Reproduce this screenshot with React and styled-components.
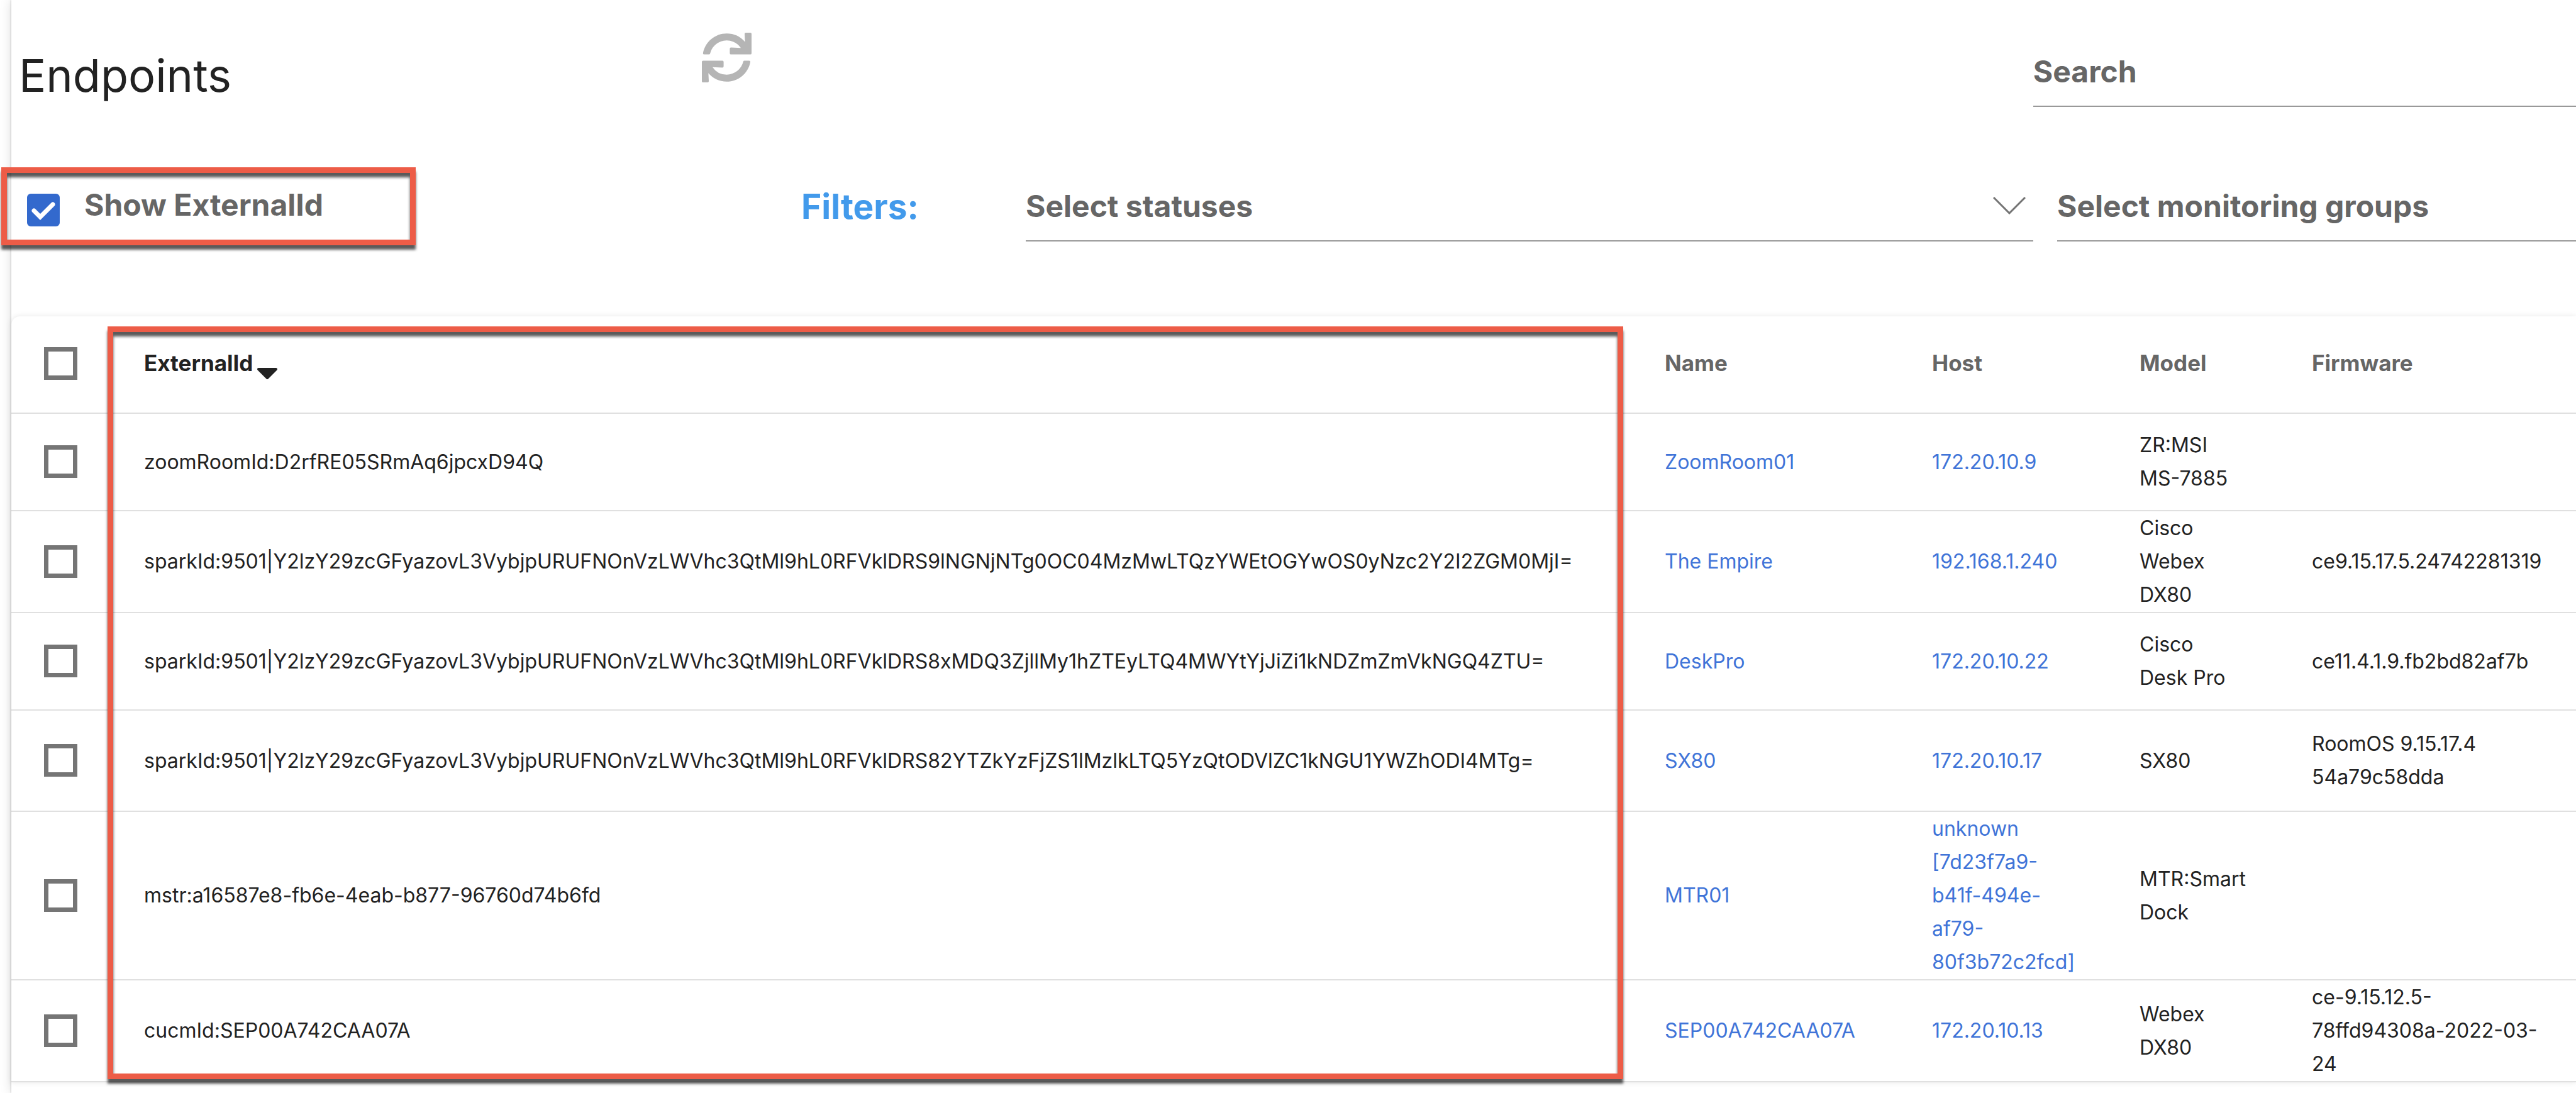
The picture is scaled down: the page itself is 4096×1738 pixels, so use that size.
import React, { useState } from "react";
import styled, { createGlobalStyle, css } from "styled-components";
import { FaSync } from "react-icons/fa";

const endpoints = [
  {
    externalId: "zoomRoomId:D2rfRE05SRmAq6jpcxD94Q",
    name: "ZoomRoom01",
    host: "172.20.10.9",
    model: "ZR:MSI\nMS-7885",
    firmware: "",
  },
  {
    externalId:
      "sparkId:9501|Y2lzY29zcGFyazovL3VybjpURUFNOnVzLWVhc3QtMl9hL0RFVklDRS9lNGNjNTg0OC04MzMwLTQzYWEtOGYwOS0yNzc2Y2I2ZGM0MjI=",
    name: "The Empire",
    host: "192.168.1.240",
    model: "Cisco\nWebex\nDX80",
    firmware: "ce9.15.17.5.24742281319",
  },
  {
    externalId:
      "sparkId:9501|Y2lzY29zcGFyazovL3VybjpURUFNOnVzLWVhc3QtMl9hL0RFVklDRS8xMDQ3ZjllMy1hZTEyLTQ4MWYtYjJiZi1kNDZmZmVkNGQ4ZTU=",
    name: "DeskPro",
    host: "172.20.10.22",
    model: "Cisco\nDesk Pro",
    firmware: "ce11.4.1.9.fb2bd82af7b",
  },
  {
    externalId:
      "sparkId:9501|Y2lzY29zcGFyazovL3VybjpURUFNOnVzLWVhc3QtMl9hL0RFVklDRS82YTZkYzFjZS1lMzlkLTQ5YzQtODVlZC1kNGU1YWZhODI4MTg=",
    name: "SX80",
    host: "172.20.10.17",
    model: "SX80",
    firmware: "RoomOS 9.15.17.4\n54a79c58dda",
    tall: true,
  },
  {
    externalId: "mstr:a16587e8-fb6e-4eab-b877-96760d74b6fd",
    name: "MTR01",
    host: "unknown\n[7d23f7a9-\nb41f-494e-\naf79-\n80f3b72c2fcd]",
    model: "MTR:Smart\nDock",
    firmware: "",
  },
  {
    externalId: "cucmId:SEP00A742CAA07A",
    name: "SEP00A742CAA07A",
    host: "172.20.10.13",
    model: "Webex\nDX80",
    firmware: "ce-9.15.12.5-\n78ffd94308a-2022-03-\n24",
  },
];

const SelectField = ({ label, noArrow }) => (
  <SelectWrapper>
    <StyledSelect aria-label={label} defaultValue="">
      <option value="">{label}</option>
    </StyledSelect>
    {!noArrow && (
      <Chevron viewBox="0 0 52 28" aria-hidden="true">
        <path d="M1 1 L26 26 L51 1" />
      </Chevron>
    )}
  </SelectWrapper>
);

const App = () => {
  const [showExternalId, setShowExternalId] = useState(true);
  const [selected, setSelected] = useState([]);

  const toggleRow = (name) => {
    setSelected((prev) =>
      prev.includes(name) ? prev.filter((n) => n !== name) : [...prev, name]
    );
  };

  const toggleAll = () => {
    setSelected((prev) =>
      prev.length === endpoints.length ? [] : endpoints.map((e) => e.name)
    );
  };

  return (
    <>
      <GlobalStyle />
      <Panel>
        <Header>
          <Title>Endpoints</Title>
          <RefreshButton type="button" aria-label="Refresh">
            <FaSync />
          </RefreshButton>
          <SearchInput type="search" placeholder="Search" aria-label="Search" />
        </Header>

        <FiltersRow>
          <ExternalIdToggle>
            <ToggleCheckbox
              type="checkbox"
              checked={showExternalId}
              onChange={(e) => setShowExternalId(e.target.checked)}
            />
            <span>Show ExternalId</span>
          </ExternalIdToggle>
          <FiltersLabel>Filters:</FiltersLabel>
          <Selects>
            <SelectField label="Select statuses" />
            <SelectField label="Select monitoring groups" noArrow />
          </Selects>
        </FiltersRow>

        <Card>
          <Table>
            <colgroup>
              <Col $width={211} />
              {showExternalId && <Col />}
              <Col $width={425} />
              <Col $width={330} />
              <Col $width={274} />
              <Col $width={420} />
            </colgroup>
            <thead>
              <Row>
                <CheckHeader>
                  <RowCheckbox
                    type="checkbox"
                    aria-label="Select all endpoints"
                    checked={selected.length === endpoints.length}
                    onChange={toggleAll}
                  />
                </CheckHeader>
                {showExternalId && (
                  <HeaderCell $active>
                    <SortButton type="button">
                      ExternalId
                      <SortArrow viewBox="0 0 34 20" aria-hidden="true">
                        <path d="M3 3 H31 L17 17 Z" />
                      </SortArrow>
                    </SortButton>
                  </HeaderCell>
                )}
                <HeaderCell>Name</HeaderCell>
                <HeaderCell>Host</HeaderCell>
                <HeaderCell>Model</HeaderCell>
                <HeaderCell>Firmware</HeaderCell>
              </Row>
            </thead>
            <tbody>
              {endpoints.map((e) => (
                <Row key={e.name} $tall={e.tall}>
                  <CheckCell>
                    <RowCheckbox
                      type="checkbox"
                      aria-label={`Select ${e.name}`}
                      checked={selected.includes(e.name)}
                      onChange={() => toggleRow(e.name)}
                    />
                  </CheckCell>
                  {showExternalId && <Cell>{e.externalId}</Cell>}
                  <Cell>
                    <CellLink href="#">{e.name}</CellLink>
                  </Cell>
                  <Cell>
                    <CellLink href="#">{e.host}</CellLink>
                  </Cell>
                  <Cell>{e.model}</Cell>
                  <Cell>{e.firmware}</Cell>
                </Row>
              ))}
            </tbody>
          </Table>
          {showExternalId && <ColumnHighlight />}
        </Card>
      </Panel>
    </>
  );
};

const GlobalStyle = createGlobalStyle`
  *, *::before, *::after {
    box-sizing: border-box;
  }

  body {
    margin: 0;
    overflow: hidden;
    background: #fff;
    color: #222;
    font-family: Inter, "Liberation Sans", sans-serif;
    font-size: 32px;
  }

  button, input, select {
    margin: 0;
    padding: 0;
    border: 0;
    border-radius: 0;
    background: none;
    color: inherit;
    font: inherit;
  }
`;

const highlightFrame = css`
  border: 9px solid #ed5c47;
  box-shadow: 0 7px 4px rgba(0, 0, 0, 0.65),
    inset 0 7px 4px rgba(0, 0, 0, 0.65);
`;

const fieldText = css`
  color: #666;
  font-size: 48px;
  font-weight: 700;
`;

const Panel = styled.main`
  min-height: 100vh;
  margin-left: 18px;
  background: #fff;
  box-shadow: -1px 0 2px rgba(0, 0, 0, 0.16), 0 0 18px rgba(0, 0, 0, 0.14);
`;

const Header = styled.header`
  display: grid;
  grid-template-columns: 1086fr 2116fr 863fr;
  align-items: start;
  padding-left: 12px;
`;

const Title = styled.h1`
  margin: 78px 0 0;
  font-size: 72px;
  font-weight: 400;
  line-height: 84px;
`;

const RefreshButton = styled.button`
  justify-self: start;
  margin-top: 52px;
  color: #b5b5b5;
  cursor: pointer;

  svg {
    display: block;
    width: 79px;
    height: 79px;
  }
`;

const SearchInput = styled.input`
  ${fieldText}
  width: 100%;
  height: 112px;
  margin-top: 58px;
  border-bottom: 2px solid #999;
  outline: none;
  appearance: none;

  &::placeholder {
    color: #666;
    opacity: 1;
  }
`;

const FiltersRow = styled.section`
  display: grid;
  grid-template-columns: 1256fr 357fr 2465fr;
  margin-top: 96px;
`;

const ExternalIdToggle = styled.label`
  ${highlightFrame}
  ${fieldText}
  display: flex;
  align-items: flex-start;
  gap: 39px;
  width: 659px;
  height: 124px;
  margin-left: -16px;
  padding: 33px 32px 0;
  line-height: 36px;
`;

const ToggleCheckbox = styled.input`
  appearance: none;
  width: 52px;
  height: 52px;
  border: 2px solid #3369cd;
  border-radius: 6px;

  &:checked {
    background: #3369cd
      url("data:image/svg+xml,%3Csvg xmlns='http://www.w3.org/2000/svg' viewBox='0 0 52 52'%3E%3Cpath d='M11 27 L21 37 L41 17' fill='none' stroke='white' stroke-width='7' stroke-linecap='round'/%3E%3C/svg%3E")
      center / 52px 52px no-repeat;
  }
`;

const FiltersLabel = styled.h2`
  margin: 0;
  color: #429aeb;
  font-size: 55px;
  font-weight: 700;
  line-height: 124px;
`;

const Selects = styled.div`
  display: grid;
  grid-template-columns: 1602fr 825fr;
  gap: 38px;
  padding-top: 6px;
`;

const SelectWrapper = styled.div`
  display: flex;
  align-items: center;
  height: 112px;
  padding-right: 12px;
  border-bottom: 2px solid #999;
`;

const StyledSelect = styled.select`
  ${fieldText}
  flex: 1;
  height: 100%;
  appearance: none;
  outline: none;
`;

const Chevron = styled.svg`
  width: 52px;
  height: 28px;
  fill: none;
  stroke: #757575;
  stroke-width: 3;
  pointer-events: none;
`;

const Card = styled.div`
  position: relative;
  margin-top: 113px;
  border-radius: 14px 0 0 0;
  background: #fff;
  box-shadow: 0 0 10px rgba(0, 0, 0, 0.1);
`;

const Table = styled.table`
  width: 100%;
  table-layout: fixed;
  border-collapse: separate;
  border-spacing: 0;
  line-height: 53px;
`;

const Col = styled.col`
  width: ${(props) => (props.$width ? `${props.$width}px` : "auto")};
`;

const Row = styled.tr`
  height: ${(props) => (props.$tall ? 161 : 155)}px;
`;

const Cell = styled.td`
  padding: 0 0 1px;
  border-bottom: 2px solid #e0e0e0;
  vertical-align: middle;
  white-space: pre-line;
`;

const CheckCell = styled(Cell)`
  padding-left: 52px;
`;

const HeaderCell = styled.th`
  padding: 0 0 4px;
  border-bottom: 2px solid #e0e0e0;
  color: ${(props) => (props.$active ? "#222" : "#666")};
  font-size: 35px;
  font-weight: 700;
  text-align: left;
  vertical-align: middle;
`;

const CheckHeader = styled(HeaderCell)`
  padding-left: 52px;
`;

const SortButton = styled.button`
  display: flex;
  align-items: flex-end;
  gap: 6px;
  cursor: pointer;
`;

const SortArrow = styled.svg`
  width: 34px;
  height: 20px;
  fill: #222;
  stroke: #222;
  stroke-width: 4;
  stroke-linejoin: round;
`;

const RowCheckbox = styled.input`
  display: block;
  appearance: none;
  width: 53px;
  height: 52px;
  border: 7px solid #757575;

  &:checked {
    background: #3369cd;
    box-shadow: inset 0 0 0 4px #fff;
  }
`;

const CellLink = styled.a`
  color: #4074d8;
  text-decoration: none;
`;

const ColumnHighlight = styled.div`
  ${highlightFrame}
  position: absolute;
  top: 16px;
  right: 1515px;
  bottom: 5px;
  left: 153px;
  pointer-events: none;
`;

export default App;
